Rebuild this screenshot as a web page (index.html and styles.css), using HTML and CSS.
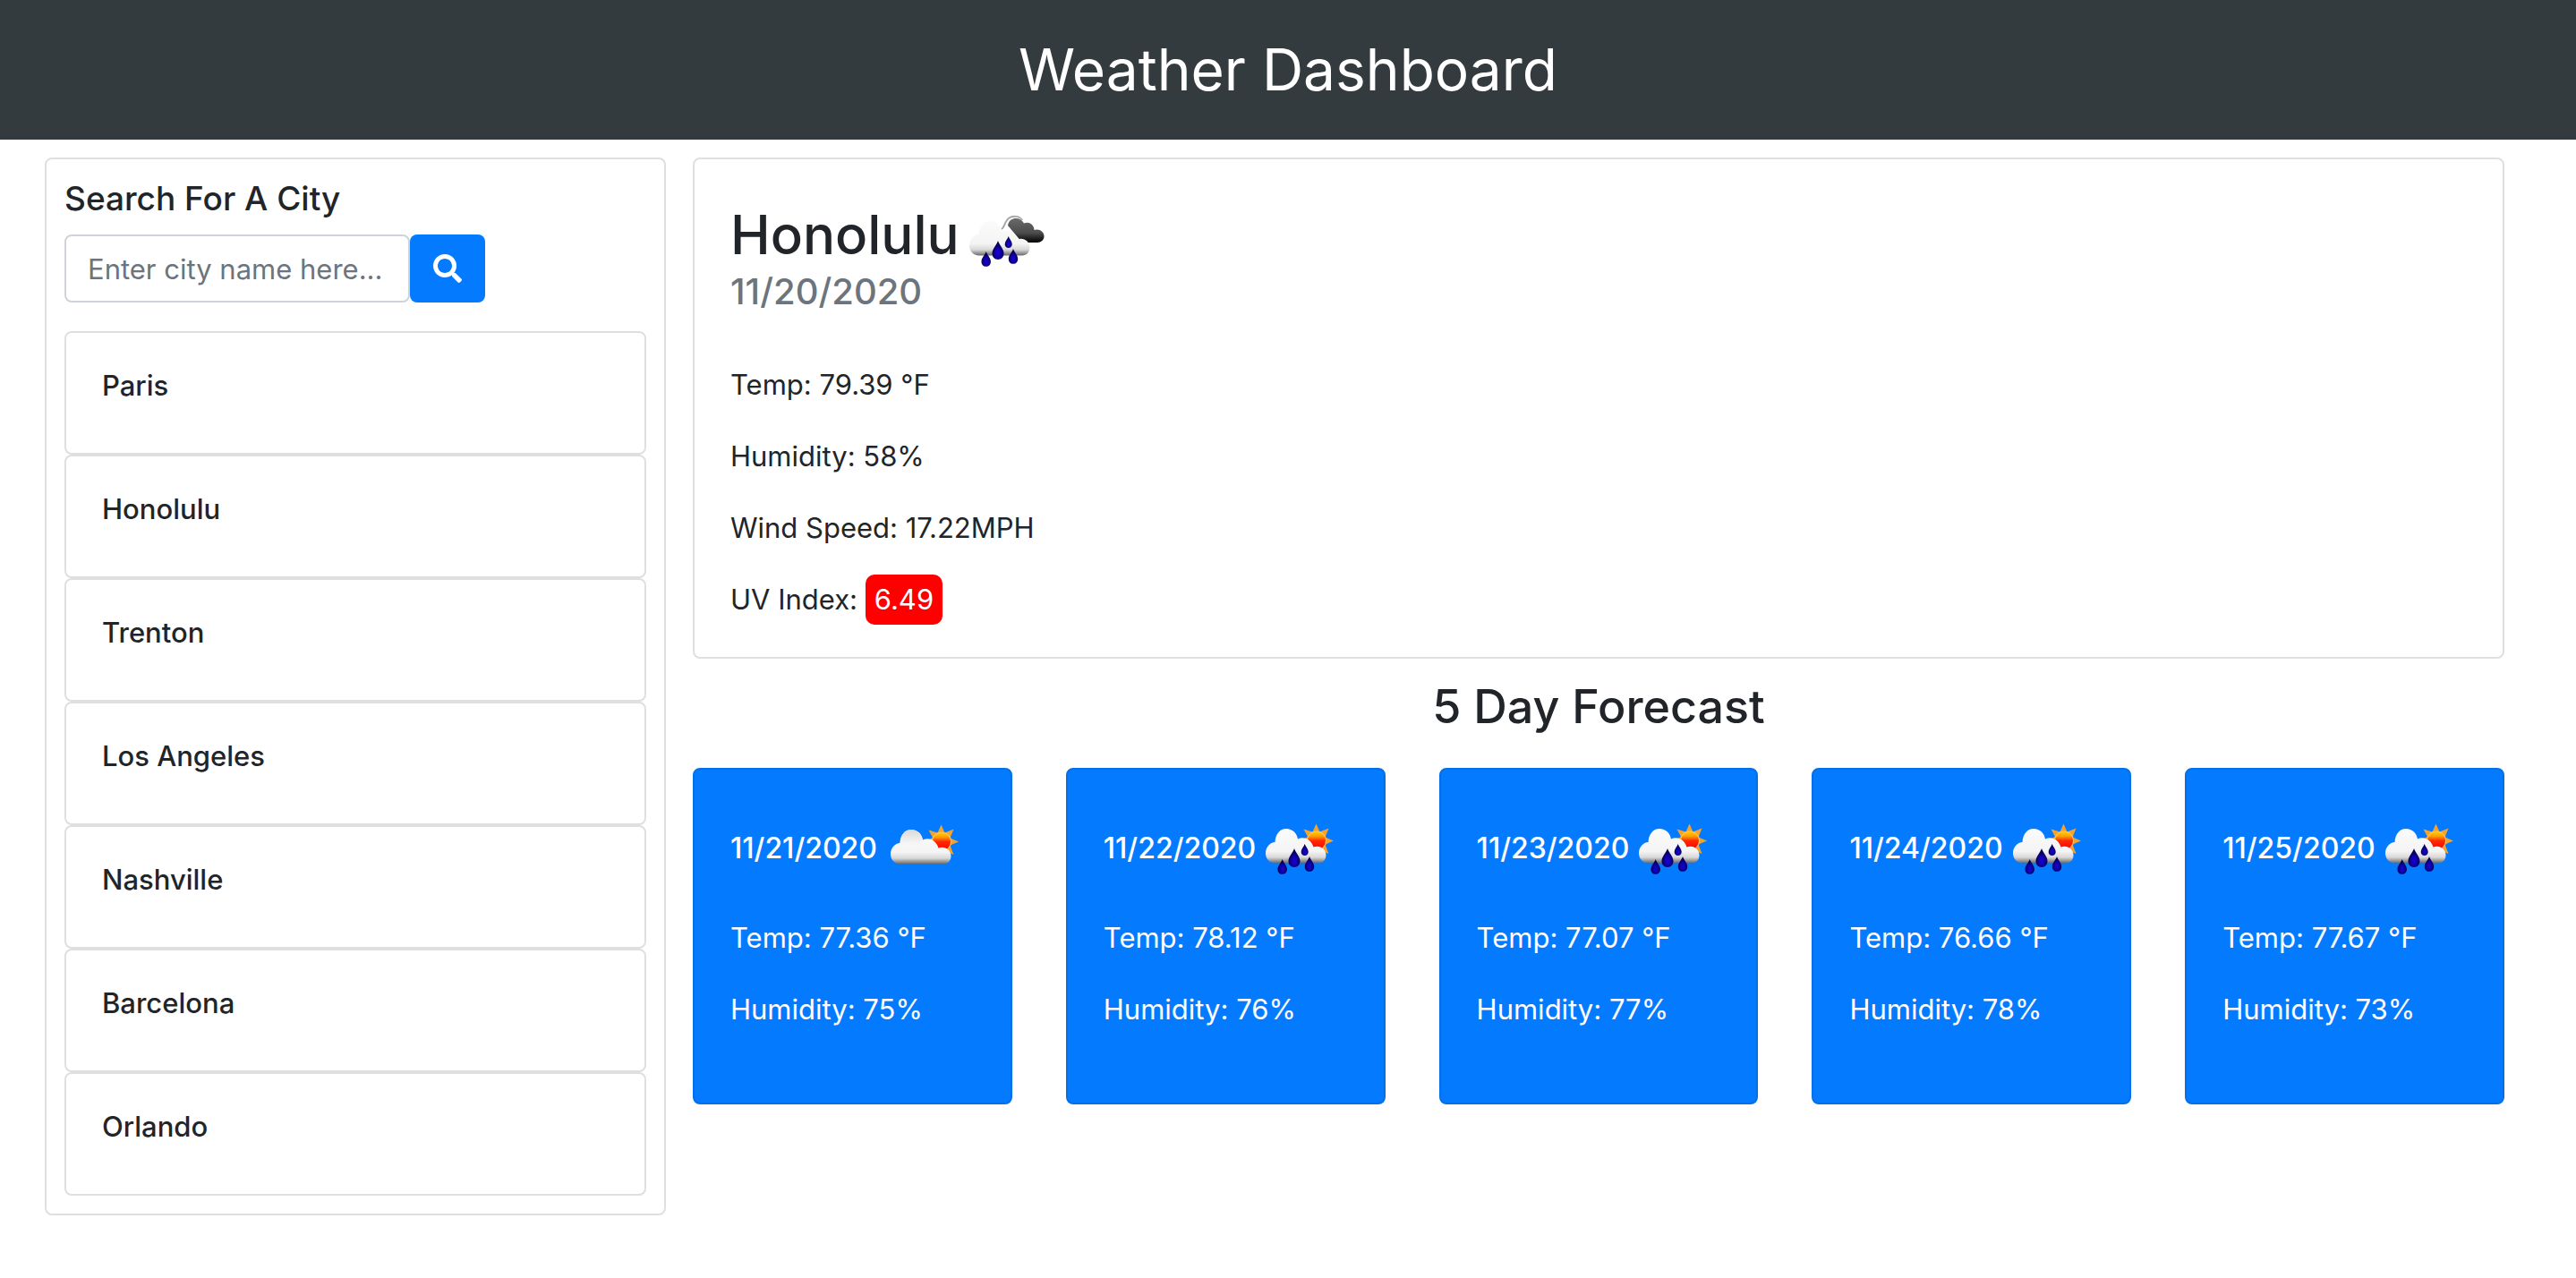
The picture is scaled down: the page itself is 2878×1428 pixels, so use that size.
FILE: index.html
```html
<!DOCTYPE html>
<html lang="en">
<head>
  <meta charset="utf-8">
  <meta name="viewport" content="width=device-width, initial-scale=1">
  <title>Weather Dashboard</title>
  <link rel="stylesheet" href="styles.css">
</head>
<body>
  <svg class="sprite" aria-hidden="true">
    <defs>
      <linearGradient id="cloud-fill" gradientUnits="userSpaceOnUse" x1="0" y1="26" x2="0" y2="65">
        <stop offset="0" stop-color="#fbfbfb"/>
        <stop offset=".65" stop-color="#f4f4f4"/>
        <stop offset=".82" stop-color="#d8d8d8"/>
        <stop offset="1" stop-color="#606060"/>
      </linearGradient>
      <linearGradient id="bump-fill" gradientUnits="userSpaceOnUse" x1="0" y1="26" x2="0" y2="48">
        <stop offset="0" stop-color="#d9d9d9"/>
        <stop offset=".7" stop-color="#f6f6f6"/>
      </linearGradient>
      <linearGradient id="dark-fill" gradientUnits="userSpaceOnUse" x1="0" y1="26" x2="0" y2="53">
        <stop offset="0" stop-color="#6a6a6a"/>
        <stop offset=".6" stop-color="#4c4c4c"/>
        <stop offset="1" stop-color="#000"/>
      </linearGradient>
      <linearGradient id="sun-fill" x1="0" y1="0" x2="0" y2="1">
        <stop offset="0" stop-color="#ffd000"/>
        <stop offset=".25" stop-color="#ff9a00"/>
        <stop offset=".5" stop-color="#ff2800"/>
        <stop offset="1" stop-color="#f00"/>
      </linearGradient>
      <radialGradient id="drop-fill" cx=".5" cy=".65" r=".5">
        <stop offset="0" stop-color="#1a00d8"/>
        <stop offset=".5" stop-color="#1000a8"/>
        <stop offset="1" stop-color="#060048"/>
      </radialGradient>
      <path id="cloud" d="M18 64.500C11 64.500 7 59 7 53.500C7 46 12 41.500 17.500 41C18 32 23 26 30 26C37 26 42 31 43 37.500C50 34 58 38 60.500 46.500C68 44 74.500 49 74.500 55.500C74.500 60.500 71 64.500 66 64.500Z"/>
      <g id="sun">
        <path fill="#f5a32c" d="M63.500 20.500L67.500 29.500L77.500 25.500L73.500 35.500L83 39.500L73.500 43.500L77.500 54L68 50L63.500 58L59 50L50 54L54 44L45 39.500L54 35L49.500 26.500L59.500 29.500Z"/>
        <circle cx="64" cy="39.500" r="11" fill="#ffc35e"/>
        <circle cx="64" cy="39.500" r="10" fill="url(#sun-fill)"/>
      </g>
      <path id="drop" fill="url(#drop-fill)" d="M0 0C1.500 5 6.500 9 6.500 14C6.500 18 4 21 0 21C-4 21 -6.500 18 -6.500 14C-6.500 9 -1.500 5 0 0Z"/>
      <g id="drops">
        <use href="#drop" transform="translate(25.700 60) scale(.8)"/>
        <use href="#drop" transform="translate(39 48)"/>
        <use href="#drop" transform="translate(50.700 43) scale(.62)"/>
        <use href="#drop" transform="translate(56 57) scale(.8)"/>
      </g>
    </defs>
    <symbol id="few-clouds" viewBox="0 0 100 100">
      <g transform="translate(4 1)">
        <use href="#sun"/>
        <use href="#cloud" fill="url(#cloud-fill)"/>
        <path fill="url(#bump-fill)" d="M17.500 41C18 32 23 26 30 26C37 26 42 31 43 37.500L38 48H22Z"/>
      </g>
    </symbol>
    <symbol id="rain-day" viewBox="0 0 100 100">
      <use href="#sun"/>
      <use href="#cloud" fill="url(#cloud-fill)"/>
      <use href="#drops"/>
    </symbol>
    <symbol id="shower" viewBox="0 0 100 100">
      <path fill="none" stroke="#a8a8a8" stroke-width="2" d="M43 38C46 36 46 32 49 28C54 22 63 23 66 28"/>
      <path fill="url(#dark-fill)" d="M50 34C51 28 55 26 59 26C63 26 66 28 68 31.500C74 29 79 33 79.500 39C85 37 90.500 41 90.500 46C90.500 50 87 53 83 53H66Z"/>
      <g transform="translate(0 3)">
        <use href="#cloud" fill="url(#cloud-fill)"/>
        <use href="#drops"/>
      </g>
    </symbol>
  </svg>

  <header class="banner"><h1>Weather Dashboard</h1></header>

  <main class="layout">
    <aside class="panel search">
      <h2><label for="city">Search For A City</label></h2>
      <form class="search-form">
        <input id="city" type="text" placeholder="Enter city name here...">
        <button type="button" aria-label="Search">
          <svg class="search-icon" viewBox="0 0 512 512" aria-hidden="true"><path fill="currentColor" d="M505 442.700L405.300 343c-4.500-4.500-10.600-7-17-7H372c27.600-35.300 44-79.700 44-128C416 93.100 322.900 0 208 0S0 93.100 0 208s93.100 208 208 208c48.300 0 92.700-16.400 128-44v16.300c0 6.400 2.500 12.500 7 17l99.700 99.700c9.400 9.400 24.600 9.400 33.900 0l28.300-28.300c9.400-9.400 9.400-24.600.1-34zM208 336c-70.700 0-128-57.200-128-128 0-70.700 57.200-128 128-128 70.700 0 128 57.200 128 128 0 70.700-57.200 128-128 128z"/></svg>
        </button>
      </form>
      <ul class="cities">
        <li>Paris</li>
        <li>Honolulu</li>
        <li>Trenton</li>
        <li>Los Angeles</li>
        <li>Nashville</li>
        <li>Barcelona</li>
        <li>Orlando</li>
      </ul>
    </aside>

    <div class="results">
      <section class="panel current">
        <h2>Honolulu<svg class="weather-icon" role="img" aria-label="Shower rain"><use href="#shower"/></svg></h2>
        <h3>11/20/2020</h3>
        <p>Temp: 79.39 °F</p>
        <p>Humidity: 58%</p>
        <p>Wind Speed: 17.22MPH</p>
        <p>UV Index: <span class="uv">6.49</span></p>
      </section>

      <h2 class="forecast-title">5 Day Forecast</h2>
      <section class="forecast">
        <article class="day">
          <h3>11/21/2020<svg class="weather-icon" role="img" aria-label="Few clouds"><use href="#few-clouds"/></svg></h3>
          <p>Temp: 77.36 °F</p>
          <p>Humidity: 75%</p>
        </article>
        <article class="day">
          <h3>11/22/2020<svg class="weather-icon" role="img" aria-label="Rain"><use href="#rain-day"/></svg></h3>
          <p>Temp: 78.12 °F</p>
          <p>Humidity: 76%</p>
        </article>
        <article class="day">
          <h3>11/23/2020<svg class="weather-icon" role="img" aria-label="Rain"><use href="#rain-day"/></svg></h3>
          <p>Temp: 77.07 °F</p>
          <p>Humidity: 77%</p>
        </article>
        <article class="day">
          <h3>11/24/2020<svg class="weather-icon" role="img" aria-label="Rain"><use href="#rain-day"/></svg></h3>
          <p>Temp: 76.66 °F</p>
          <p>Humidity: 78%</p>
        </article>
        <article class="day">
          <h3>11/25/2020<svg class="weather-icon" role="img" aria-label="Rain"><use href="#rain-day"/></svg></h3>
          <p>Temp: 77.67 °F</p>
          <p>Humidity: 73%</p>
        </article>
      </section>
    </div>
  </main>
</body>
</html>
```

FILE: styles.css
```css
* {
  box-sizing: border-box;
}

body {
  margin: 0;
  background: #fff;
  color: #212529;
  font-family: Inter, "Liberation Sans", sans-serif;
  font-size: 31px;
  line-height: 48px;
}

h1, h2, h3, p, ul {
  margin: 0;
  padding: 0;
  font-weight: 500;
}

p {
  font-weight: 400;
}

.sprite {
  position: absolute;
  width: 0;
  height: 0;
}

.banner {
  padding: 36px;
  background: #343b3e;
  color: #fff;
  text-align: center;
}

.banner h1 {
  font-size: 64px;
  font-weight: 400;
  line-height: 84px;
}

.layout {
  display: grid;
  grid-template-columns: minmax(0, 694fr) minmax(0, 2024fr);
  align-items: start;
  gap: 30px;
  padding: 20px 80px 20px 50px;
}

.panel {
  border: 2px solid #dfdfdf;
  border-radius: 8px;
}

.search {
  padding: 20px;
}

.search h2 {
  margin-bottom: 16px;
  font-size: 37px;
}

.search-form {
  display: flex;
  margin-bottom: 32px;
}

.search-form input {
  width: 386px;
  height: 76px;
  padding: 12px 24px;
  border: 2px solid #ced4da;
  border-radius: 8px;
  background: #fff;
  color: #495057;
  font: inherit;
}

.search-form input::placeholder {
  color: #6c757d;
  opacity: 1;
}

.search-form button {
  display: flex;
  align-items: center;
  justify-content: center;
  width: 84px;
  height: 76px;
  padding: 0;
  border: 0;
  border-radius: 8px;
  background: #047bff;
  color: #fff;
}

.search-icon {
  width: 32px;
  height: 32px;
}

.cities {
  list-style: none;
}

.cities li {
  padding: 40px 40px 56px;
  border: 2px solid #dfdfdf;
  border-radius: 8px;
  font-weight: 500;
  line-height: 38px;
}

.weather-icon {
  width: 100px;
  height: 100px;
  margin-left: 4px;
  vertical-align: middle;
}

.current {
  padding: 40px;
}

.current h2 {
  font-size: 60px;
}

.current h3 {
  margin: -18px 0 54px;
  color: #6c757d;
  font-size: 40px;
  line-height: 52px;
}

.current p + p {
  margin-top: 32px;
}

.uv {
  display: inline-block;
  margin: -4px 0;
  padding: 4px 10px;
  border-radius: 10px;
  background: #f00;
  color: #fff;
}

.forecast-title {
  padding: 20px 0 34px;
  font-size: 52px;
  line-height: 68px;
  text-align: center;
}

.forecast {
  display: grid;
  grid-template-columns: repeat(5, minmax(0, 1fr));
  gap: 60px;
}

.day {
  padding: 40px 40px 80px;
  border: 2px solid #0470e8;
  border-radius: 8px;
  background: #047bff;
  color: #fff;
}

.day h3 {
  margin-bottom: 24px;
  font-size: 32px;
  white-space: nowrap;
}

.day p + p {
  margin-top: 32px;
}
```
